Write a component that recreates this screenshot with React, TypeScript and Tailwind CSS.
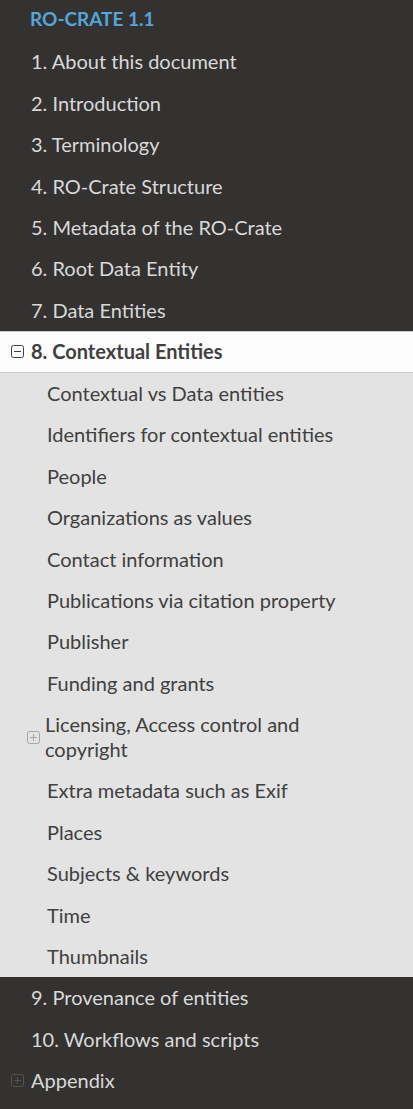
const top = [
  '1. About this document',
  '2. Introduction',
  '3. Terminology',
  '4. RO-Crate Structure',
  '5. Metadata of the RO-Crate',
  '6. Root Data Entity',
  '7. Data Entities',
];

const sub = [
  'Contextual vs Data entities',
  'Identifiers for contextual entities',
  'People',
  'Organizations as values',
  'Contact information',
  'Publications via citation property',
  'Publisher',
  'Funding and grants',
  'Licensing, Access control and copyright',
  'Extra metadata such as Exif',
  'Places',
  'Subjects & keywords',
  'Time',
  'Thumbnails',
];

const after = ['9. Provenance of entities', '10. Workflows and scripts'];

const BoxIcon = ({ plus, color }: { plus?: boolean; color: string }) => (
  <svg width="13" height="13" viewBox="0 0 13 13" fill="none" className="shrink-0">
    <rect x="0.5" y="0.5" width="12" height="12" rx="2" stroke={color} />
    <line x1="3" y1="6.5" x2="10" y2="6.5" stroke={color} />
    {plus ? <line x1="6.5" y1="3" x2="6.5" y2="10" stroke={color} /> : null}
  </svg>
);

export default function App() {
  return (
    <div
      className="w-[413px] min-h-[1109px] bg-[#343131] text-[20px]"
      style={{ fontFamily: 'Lato, "Noto Sans", sans-serif' }}
    >
      <div className="h-[41.3px] pl-[30px] pt-[6px] text-[19px] font-bold leading-[25px] text-[#55a5d9]">
        RO-CRATE 1.1
      </div>
      {top.map((t) => (
        <div key={t} className="py-[8.2px] pl-[31px] pr-[32px] leading-[25px] text-[#d9d9d9]">
          {t}
        </div>
      ))}
      <div className="flex items-center gap-[7px] border-y border-[#c9c9c9] bg-[#fcfcfc] py-[7.5px] pl-[11px] font-bold leading-[25px] text-[#404040]">
        <BoxIcon color="#404040" />
        <span>8. Contextual Entities</span>
      </div>
      <div className="bg-[#e3e3e3] text-[#404040]">
        {sub.map((t) =>
          t.startsWith('Licensing') ? (
            <div key={t} className="flex items-center gap-[5px] py-[8.2px] pl-[27px] pr-[32px] leading-[25px]">
              <BoxIcon plus color="#a6a6a6" />
              <span>{t}</span>
            </div>
          ) : (
            <div key={t} className="py-[8.2px] pl-[47px] pr-[32px] leading-[25px]">
              {t}
            </div>
          ),
        )}
      </div>
      {after.map((t) => (
        <div key={t} className="py-[8.2px] pl-[31px] pr-[32px] leading-[25px] text-[#d9d9d9]">
          {t}
        </div>
      ))}
      <div className="flex items-center gap-[7px] py-[8.2px] pl-[11px] leading-[25px] text-[#d9d9d9]">
        <BoxIcon plus color="#555252" />
        <span>Appendix</span>
      </div>
    </div>
  );
}
